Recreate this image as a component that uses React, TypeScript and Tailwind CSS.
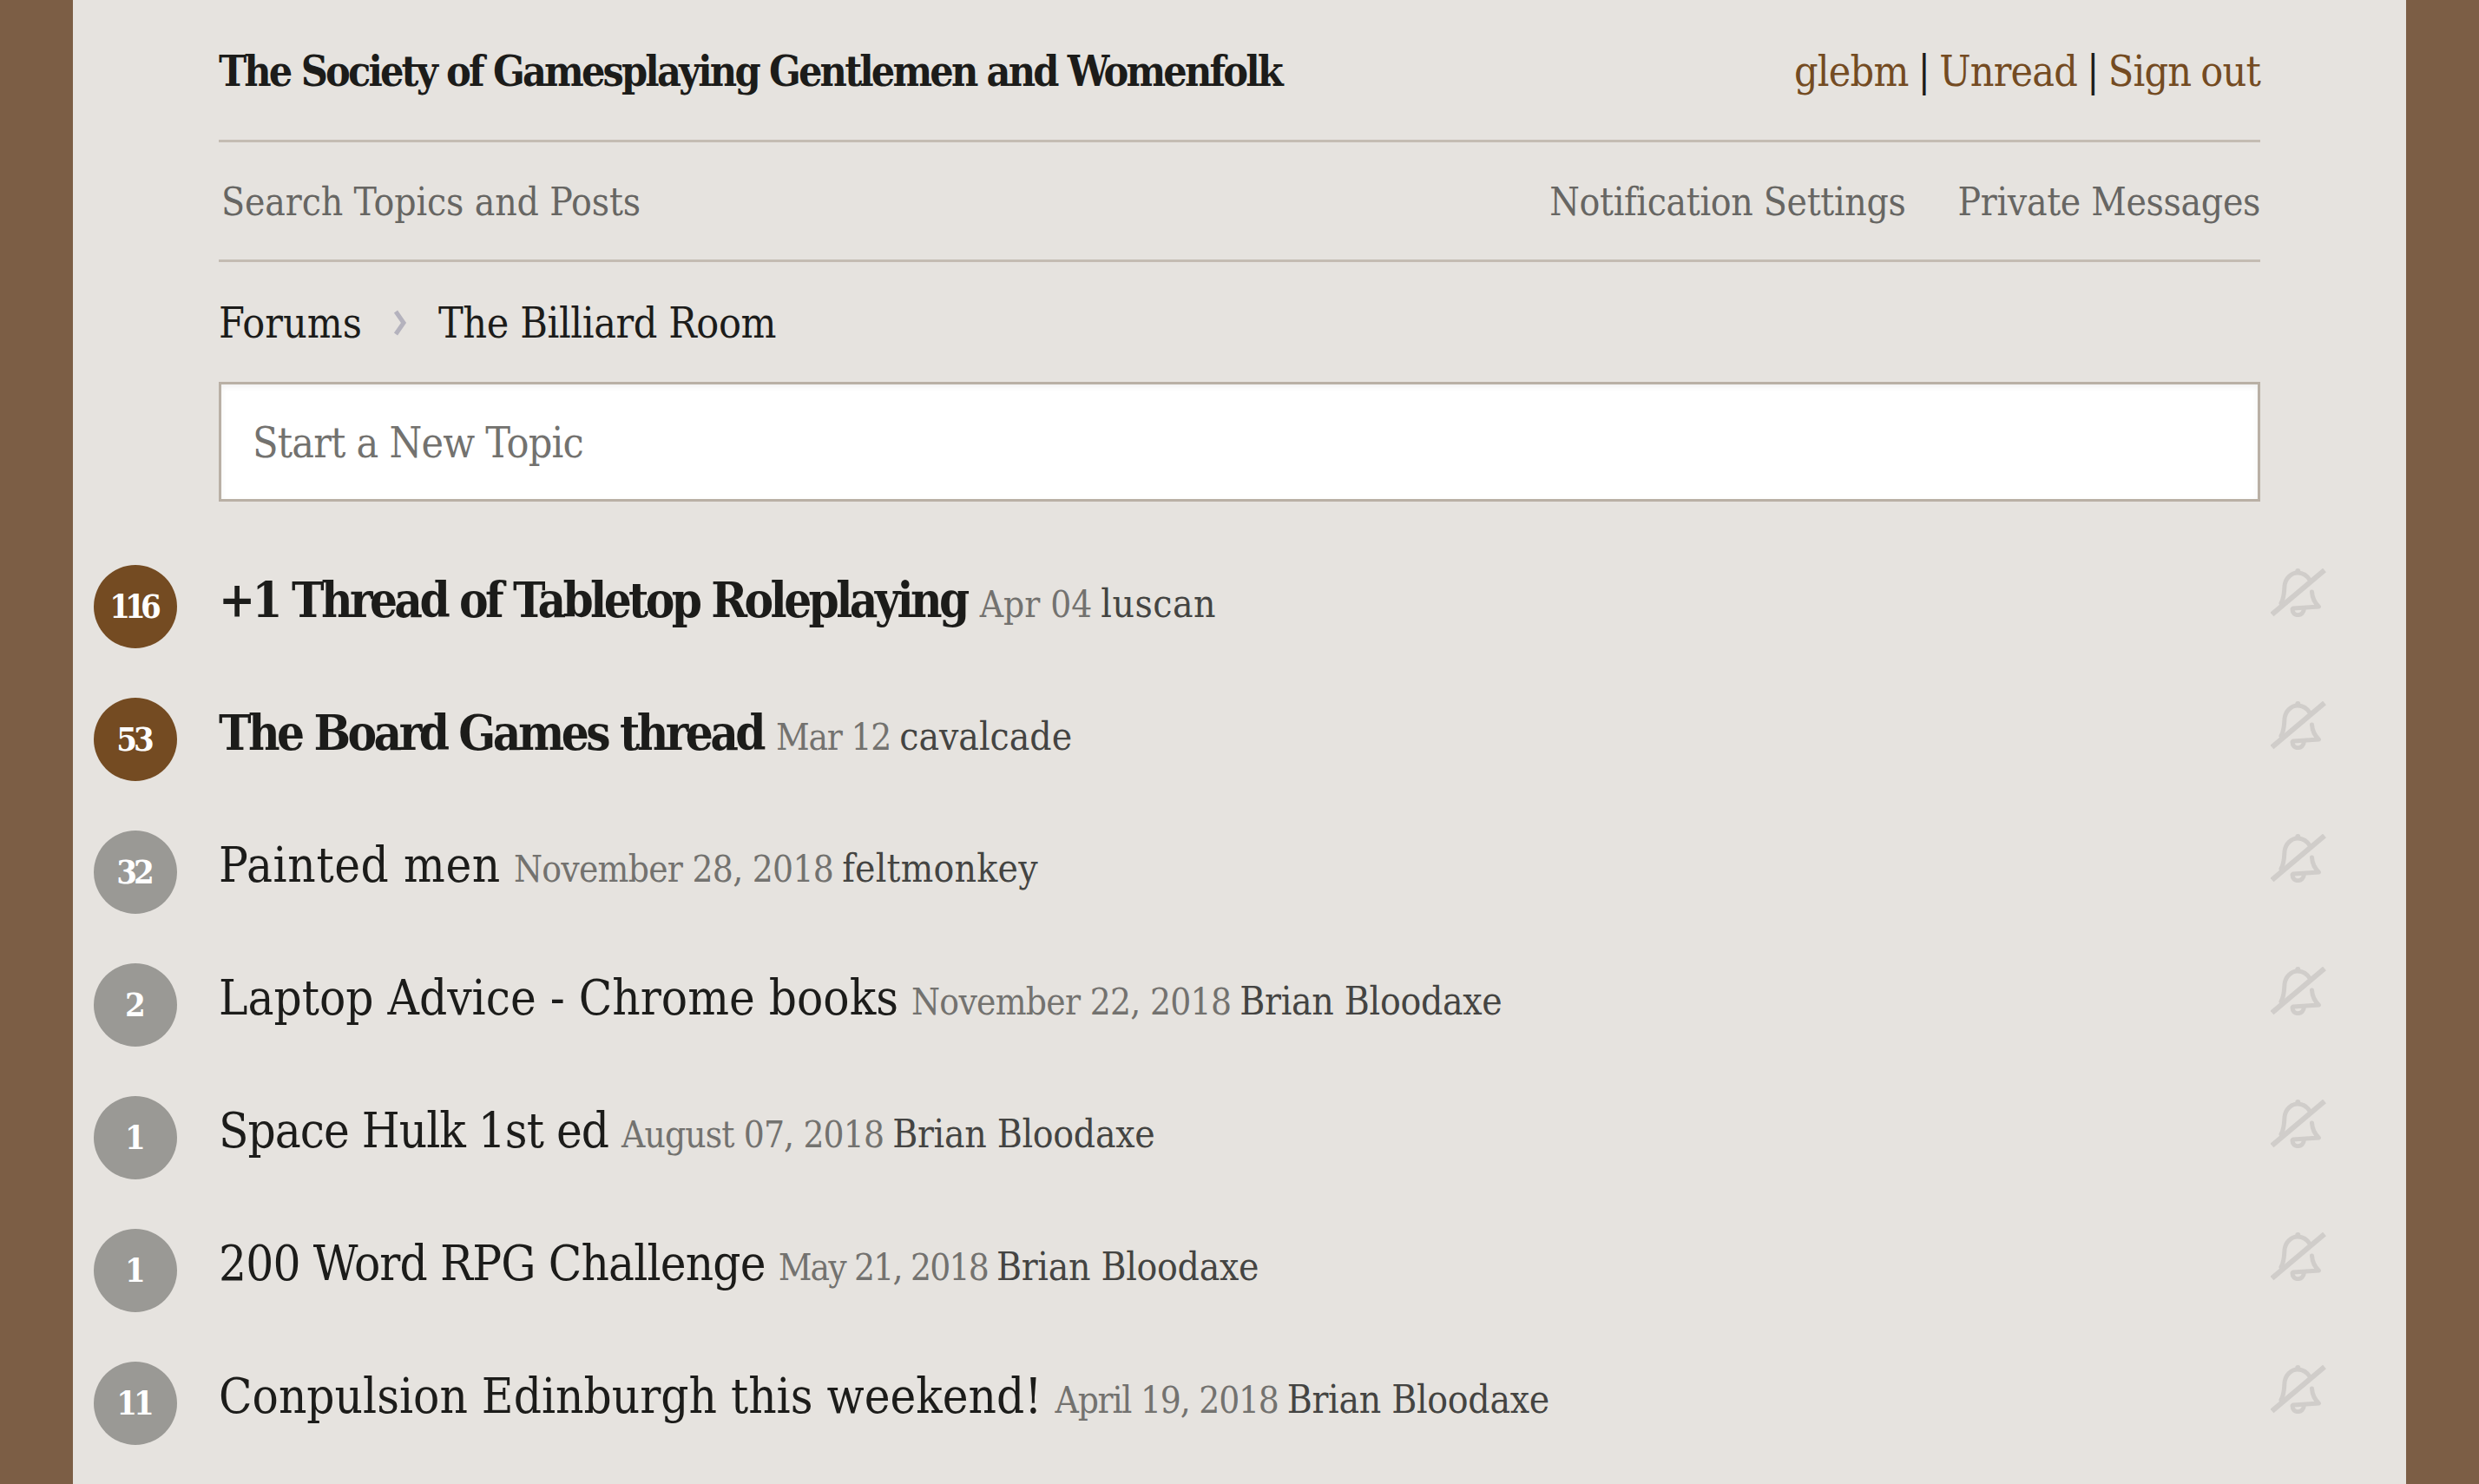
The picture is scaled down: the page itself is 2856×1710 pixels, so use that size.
const font = "[font-family:'DejaVu_Serif_Condensed','DejaVu_Serif',serif]";

type Topic = { n: string; title: string; date: string; user: string; hot?: boolean; tt: string; dt: string; ut: string; nt: string };
const topics: Topic[] = [
  { n: "116", nt: "tracking-[-6px] pr-[6px]", title: "+1 Thread of Tabletop Roleplaying", date: "Apr 04", user: "luscan", hot: true, tt: "tracking-[-3.6px]", dt: "tracking-[0px]", ut: "tracking-[0.5px]" },
  { n: "53", nt: "tracking-[-4px] pr-[4px]", title: "The Board Games thread", date: "Mar 12", user: "cavalcade", hot: true, tt: "tracking-[-3.55px]", dt: "tracking-[-1.2px]", ut: "tracking-[0px]" },
  { n: "32", nt: "tracking-[-4px] pr-[4px]", title: "Painted men", date: "November 28, 2018", user: "feltmonkey", tt: "tracking-[0.6px]", dt: "tracking-[-0.7px]", ut: "tracking-[0.25px]" },
  { n: "2", nt: "", title: "Laptop Advice - Chrome books", date: "November 22, 2018", user: "Brian Bloodaxe", tt: "tracking-[0px]", dt: "tracking-[-0.7px]", ut: "tracking-[-0.3px]" },
  { n: "1", nt: "", title: "Space Hulk 1st ed", date: "August 07, 2018", user: "Brian Bloodaxe", tt: "tracking-[-1px]", dt: "tracking-[-0.85px]", ut: "tracking-[-0.3px]" },
  { n: "1", nt: "", title: "200 Word RPG Challenge", date: "May 21, 2018", user: "Brian Bloodaxe", tt: "tracking-[-0.85px]", dt: "tracking-[-1.8px]", ut: "tracking-[-0.3px]" },
  { n: "11", nt: "tracking-[-4px] pr-[4px]", title: "Conpulsion Edinburgh this weekend!", date: "April 19, 2018", user: "Brian Bloodaxe", tt: "tracking-[0px]", dt: "tracking-[-1.2px]", ut: "tracking-[-0.3px]" },
];

function BellOff() {
  return (
    <svg width="64" height="56" viewBox="0 0 64 56" fill="none" stroke="#d0cdca" strokeWidth="5" strokeLinecap="round" strokeLinejoin="round">
      <path d="M1.5 53 L62 2" strokeWidth="6" strokeLinecap="butt" />
      <path d="M12 40 C16 33 15.5 25 16 20 C17 11 24 5 31 5 C37 5 42 8 45.5 14" />
      <circle cx="31.3" cy="3" r="3" fill="#d0cdca" stroke="none" />
      <path d="M47.5 27 C48 34 51 40 55.5 44 L26 46" />
      <path d="M25 47 C25 56 38 56 38.5 46" />
    </svg>
  );
}

export default function App() {
  return (
    <div className={`min-h-[1710px] bg-[#7c5e45] px-[84px] ${font}`}>
      <div className="h-[1710px] overflow-hidden bg-[#e6e3df] text-[#1c1c1a]">
        <div className="mx-[168px]">
          <header className="flex h-[161px] items-center justify-between pt-[2px]">
            <h1 className="text-[48px] font-bold tracking-[-2.85px]">The Society of Gamesplaying Gentlemen and Womenfolk</h1>
            <div className="text-[48px] tracking-[-0.8px] [word-spacing:-2px]">
              <span className="text-[#744b22]">glebm</span> | <span className="text-[#744b22]">Unread</span> | <span className="text-[#744b22]">Sign out</span>
            </div>
          </header>
          <nav className="flex h-[141px] items-center justify-between border-y-[3px] border-[#c4bcb3] pl-[3px] pt-[3px] text-[44px] text-[#676663]">
            <span className="tracking-[-0.1px]">Search Topics and Posts</span>
            <div className="flex gap-[60px] tracking-[-0.3px]">
              <span>Notification Settings</span>
              <span>Private Messages</span>
            </div>
          </nav>
          <div className="flex h-[138px] items-center pt-[2px] text-[48px]">
            <span>Forums</span>
            <svg className="mx-[36px]" width="16" height="32" viewBox="0 0 16 32" fill="none" stroke="#b4b2bd" strokeWidth="5">
              <path d="M3 3 L12 16 L3 29" />
            </svg>
            <span className="tracking-[-0.4px]">The Billiard Room</span>
          </div>
          <div className="flex h-[138px] items-center border-[3px] border-[#b9b0a5] bg-white pl-[36px] pt-[2px] text-[48px] tracking-[-0.8px] text-[#73726f] shadow-[inset_0_3px_6px_rgba(0,0,0,0.06)]">
            Start a New Topic
          </div>
        </div>
        <ul className="mt-[44px]">
          {topics.map((t, i) => (
            <li key={i} className="flex h-[153px] items-center pl-[24px] pr-[92px]">
              <div className={`flex h-[96px] w-[96px] shrink-0 items-center justify-center rounded-full text-[38px] font-bold text-white ${t.nt} ${t.hot ? "bg-[#744b22]" : "bg-[#9a9995]"}`}>
                {t.n}
              </div>
              <div className="mb-[16px] ml-[48px] flex-1 whitespace-nowrap">
                <span className={`text-[56px] ${t.tt} ${t.hot ? "font-bold" : ""}`}>{t.title}</span>
                <span className={`ml-[15px] text-[42px] text-[#73726f] ${t.dt}`}>{t.date}</span>
                <span className={`ml-[10px] text-[44px] text-[#444442] ${t.ut}`}>{t.user}</span>
              </div>
              <div className="mb-[32px] shrink-0"><BellOff /></div>
            </li>
          ))}
        </ul>
      </div>
    </div>
  );
}
